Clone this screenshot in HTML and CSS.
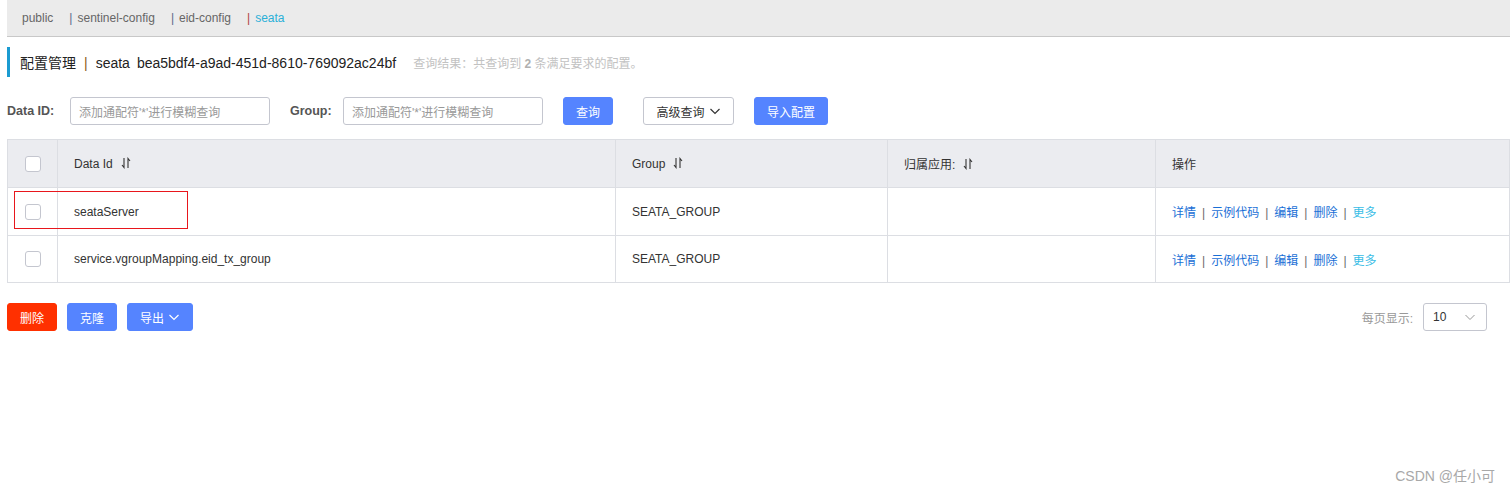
FILE: index.html
```html
<!DOCTYPE html>
<html>
<head>
<meta charset="utf-8">
<link rel="stylesheet" href="styles.css">
</head>
<body>
<div class="page">
  <div class="nsbar">
    <span class="ns">public</span>
    <span class="ns"><span class="sep">|</span>sentinel-config</span>
    <span class="ns"><span class="sep">|</span>eid-config</span>
    <span class="ns active"><span class="sep red">|</span>seata</span>
  </div>

  <div class="title">
    <span class="title-main">配置管理<span class="tsep">|</span>seata<span class="tid">bea5bdf4-a9ad-451d-8610-769092ac24bf</span></span>
    <span class="title-sub">查询结果：共查询到 <b>2</b> 条满足要求的配置。</span>
  </div>

  <div class="search">
    <label class="lbl lbl1">Data ID:</label>
    <div class="input">添加通配符'*'进行模糊查询</div>
    <label class="lbl lbl2">Group:</label>
    <div class="input">添加通配符'*'进行模糊查询</div>
    <button class="btn primary b-query">查询</button>
    <button class="btn normal b-adv">高级查询<svg class="chev" viewBox="0 0 12 12" width="12" height="12"><path d="M1.5 4 L6 8.5 L10.5 4" fill="none" stroke="#333" stroke-width="1.2"/></svg></button>
    <button class="btn primary b-import">导入配置</button>
  </div>

  <div class="table-wrap">
    <table class="tbl">
      <colgroup>
        <col class="c0"><col class="c1"><col class="c2"><col class="c3"><col class="c4">
      </colgroup>
      <thead>
        <tr>
          <th class="cb-cell"><span class="cb"></span></th>
          <th>Data Id<svg class="sort" viewBox="0 0 10 12" width="10" height="12"><path d="M3 1 V10.5 L1 8" fill="none" stroke="#333" stroke-width="1.1"/><path d="M7 11 V1.5 L9 4" fill="none" stroke="#333" stroke-width="1.1"/></svg></th>
          <th>Group<svg class="sort" viewBox="0 0 10 12" width="10" height="12"><path d="M3 1 V10.5 L1 8" fill="none" stroke="#333" stroke-width="1.1"/><path d="M7 11 V1.5 L9 4" fill="none" stroke="#333" stroke-width="1.1"/></svg></th>
          <th>归属应用:<svg class="sort" viewBox="0 0 10 12" width="10" height="12"><path d="M3 1 V10.5 L1 8" fill="none" stroke="#333" stroke-width="1.1"/><path d="M7 11 V1.5 L9 4" fill="none" stroke="#333" stroke-width="1.1"/></svg></th>
          <th>操作</th>
        </tr>
      </thead>
      <tbody>
        <tr>
          <td class="cb-cell"><span class="cb"></span></td>
          <td>seataServer</td>
          <td>SEATA_GROUP</td>
          <td></td>
          <td class="ops"><a>详情</a><span class="osep">|</span><a>示例代码</a><span class="osep">|</span><a>编辑</a><span class="osep">|</span><a>删除</a><span class="osep">|</span><a class="more">更多</a></td>
        </tr>
        <tr>
          <td class="cb-cell"><span class="cb"></span></td>
          <td>service.vgroupMapping.eid_tx_group</td>
          <td>SEATA_GROUP</td>
          <td></td>
          <td class="ops"><a>详情</a><span class="osep">|</span><a>示例代码</a><span class="osep">|</span><a>编辑</a><span class="osep">|</span><a>删除</a><span class="osep">|</span><a class="more">更多</a></td>
        </tr>
      </tbody>
    </table>
    <div class="highlight"></div>
  </div>

  <div class="footer">
    <div class="actions">
      <button class="btn danger b-small">删除</button>
      <button class="btn primary b-small">克隆</button>
      <button class="btn primary b-export">导出<svg class="chev" viewBox="0 0 12 12" width="12" height="12"><path d="M1.5 4 L6 8.5 L10.5 4" fill="none" stroke="#fff" stroke-width="1.2"/></svg></button>
    </div>
    <div class="pager">
      <span class="pl">每页显示:</span>
      <div class="select"><span>10</span><svg viewBox="0 0 12 12" width="12" height="12"><path d="M1.5 4 L6 8.5 L10.5 4" fill="none" stroke="#999" stroke-width="1"/></svg></div>
    </div>
  </div>
</div>
<div class="watermark">CSDN @任小可</div>
</body>
</html>
```
FILE: styles.css
```css
* { box-sizing: border-box; }
html, body { margin: 0; padding: 0; background: #fff; }
body {
  font-family: "Liberation Sans", "Noto Sans CJK SC", sans-serif;
  font-size: 12px;
  color: #333;
  width: 1510px;
  height: 494px;
  overflow: hidden;
  position: relative;
}
.page { padding-left: 7px; }

.nsbar {
  height: 37px;
  background: #ebebeb;
  border-bottom: 1px solid #c8c8c8;
  display: flex;
  align-items: center;
  padding-left: 15px;
  padding-bottom: 1px;
  color: #666;
}
.ns { margin-right: 16px; }
.ns .sep { margin-right: 5px; color: #5a6a8a; }
.ns .sep.red { color: #b04040; }
.ns.active { color: #2ab0d8; }

.title {
  margin-top: 10px;
  height: 30px;
  border-left: 3px solid #1b9bd1;
  display: flex;
  align-items: center;
  padding-left: 10px;
}
.title-main { font-size: 14px; color: #222; }
.tsep { margin: 0 8px; color: #8a5a1a; }
.tid { margin-left: 7px; }
.title-sub { margin-left: 17px; color: #c2c2c2; font-size: 12px; }
.title-sub b { color: #b0b0b0; }

.search {
  margin-top: 20px;
  height: 28px;
  display: flex;
  align-items: center;
}
.lbl { font-weight: bold; color: #555; font-size: 12.5px; }
.lbl1 { width: 63px; }
.lbl2 { width: 53px; margin-left: 20px; }
.input {
  width: 200px;
  height: 28px;
  border: 1px solid #c4c6cf;
  border-radius: 3px;
  display: flex;
  align-items: center;
  padding-left: 8px;
  color: #999;
}
.btn {
  height: 28px;
  border-radius: 3px;
  font-family: inherit;
  font-size: 12px;
  display: inline-flex;
  align-items: center;
  justify-content: center;
  padding: 0;
  cursor: pointer;
}
.primary { background: #5584ff; color: #fff; border: 1px solid #5584ff; }
.danger { background: #ff3000; color: #fff; border: 1px solid #ff3000; }
.normal { background: #fff; color: #333; border: 1px solid #c4c6cf; }
.b-query { width: 50px; margin-left: 20px; }
.b-adv { width: 91px; margin-left: 30px; }
.b-import { width: 74px; margin-left: 20px; }
.chev { margin-left: 4px; }

.table-wrap { position: relative; margin-top: 14px; }
.tbl {
  width: 100%;
  border-collapse: collapse;
  table-layout: fixed;
  border: 1px solid #dcdee3;
}
.c0 { width: 50px; }
.c1 { width: 558px; }
.c2 { width: 272px; }
.c3 { width: 268px; }
.tbl th, .tbl td {
  border: 1px solid #dcdee3;
  text-align: left;
  font-weight: normal;
  padding: 0 0 0 16px;
  color: #333;
  white-space: nowrap;
}
.tbl th { background: #ebecf0; height: 48px; }
.tbl td { height: 48px; }
.tbl tbody tr:last-child td { height: 47px; }
.tbl .cb-cell { padding: 0; text-align: center; }
.cb {
  display: inline-block;
  width: 16px;
  height: 16px;
  border: 1px solid #c4c6cf;
  border-radius: 3px;
  background: #fff;
  vertical-align: middle;
}
.sort { margin-left: 8px; vertical-align: -1px; }
.ops a { color: #1a6fd6; }
.ops a.more { color: #39bde6; }
.osep { margin: 0 6px; color: #6a6a6a; }

.highlight {
  position: absolute;
  left: 7px;
  top: 52px;
  width: 174px;
  height: 38px;
  border: 1px solid #e8161c;
}

.footer {
  margin-top: 20px;
  display: flex;
  justify-content: space-between;
  align-items: center;
  padding-right: 23px;
}
.actions { display: flex; gap: 10px; }
.b-small { width: 50px; }
.b-export { width: 66px; }
.pager { display: flex; align-items: center; }
.pl { color: #999; margin-right: 10px; }
.select {
  width: 64px;
  height: 28px;
  border: 1px solid #c4c6cf;
  border-radius: 3px;
  display: flex;
  align-items: center;
  justify-content: space-between;
  padding: 0 10px 0 9px;
  color: #333;
}

.watermark {
  position: absolute;
  right: 15px;
  bottom: 9px;
  color: #a8a8a8;
  font-size: 14px;
}
```
